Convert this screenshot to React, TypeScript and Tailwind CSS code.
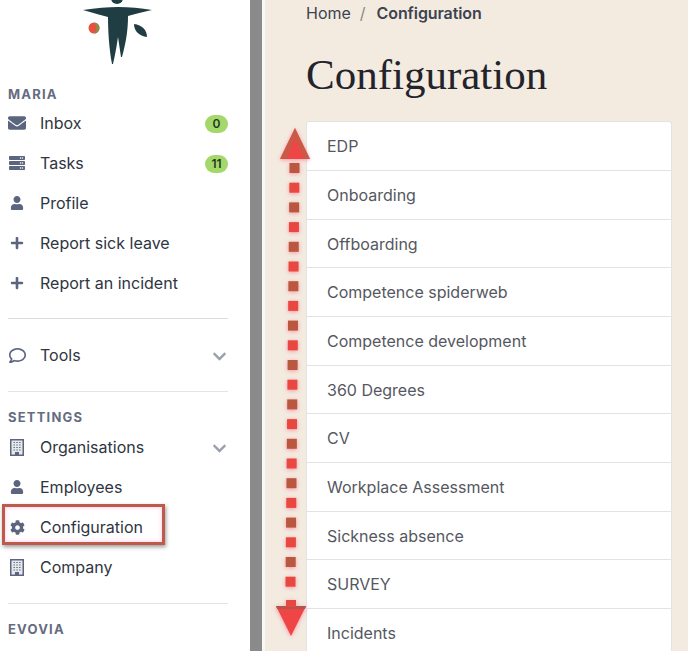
import type { ReactNode } from 'react'
import { FaChevronDown, FaCog, FaEnvelope, FaPlus, FaRegComment, FaServer, FaUser } from 'react-icons/fa'

const configItems = [
  'EDP',
  'Onboarding',
  'Offboarding',
  'Competence spiderweb',
  'Competence development',
  '360 Degrees',
  'CV',
  'Workplace Assessment',
  'Sickness absence',
  'SURVEY',
  'Incidents',
]

function NavItem({ icon, label, right }: { icon: ReactNode; label: string; right?: ReactNode }) {
  return (
    <div className="flex h-[40px] items-center">
      <span className="flex w-[18px] justify-center text-[#5b6580]">{icon}</span>
      <span className="ml-[14px] flex-1 text-[16px] text-[#2f3542]">{label}</span>
      {right}
    </div>
  )
}

function Badge({ value }: { value: string }) {
  return (
    <span className="mt-[2px] flex h-[18px] min-w-[23px] items-center justify-center rounded-full bg-[#a5d86a] px-[6px] text-[12px] font-semibold text-[#1f3a22]">
      {value}
    </span>
  )
}

function SectionLabel({ children }: { children: string }) {
  return <div className="text-[13px] font-bold leading-[16px] tracking-[1.2px] text-[#656c80]">{children}</div>
}

function Chevron() {
  return <FaChevronDown className="mt-[3px] mr-[1px] text-[15px] text-[#9aa0ad]" />
}

function BuildingIcon() {
  return (
    <svg width="14" height="17" viewBox="0 0 14 17">
      <rect x="0.75" y="0.75" width="12.5" height="15.5" fill="#e6e8ec" stroke="#5b6580" strokeWidth="1.5" />
      <path d="M3.5 3.5h7M3.5 6h7M3.5 8.5h7M3.5 11h7" stroke="#5b6580" strokeWidth="1.2" strokeDasharray="1.4 1.4" />
      <rect x="5" y="13" width="4" height="3" fill="#5b6580" />
    </svg>
  )
}

function Logo() {
  return (
    <svg width="72" height="66" viewBox="0 0 72 66" className="absolute left-[82px] top-0">
      <circle cx="35" cy="-2" r="6" fill="#1f3d42" />
      <path
        d="M1 10 C14 8 26 7 36 7 C47 7 59 8 70 10 C61 12 53 14 46 16 C46 30 44 42 40 57 L39 57 L36 37 C35 44 33 56 31 64 L30 64 C27 48 26 30 26 17 C17 15 9 12 1 10Z"
        fill="#1f3d42"
      />
      <path d="M52 24 C60 25 65 30 65 37 C57 36 52 31 52 24Z" fill="#1f3d42" />
      <circle cx="12" cy="28" r="5.5" fill="#e8503f" />
      <path d="M12 22.5 A5.5 5.5 0 0 1 12 33.5 A8 8 0 0 0 12 22.5Z" fill="#8f8a4a" />
    </svg>
  )
}

function ArrowOverlay() {
  const squares = Array.from({ length: 22 }, (_, i) => i)
  return (
    <svg
      width="50"
      height="530"
      viewBox="0 0 50 530"
      className="absolute left-[268px] top-[122px] drop-shadow-[0_1px_2px_rgba(255,90,130,0.6)]"
    >
      <path d="M27 6 L42 37 L12 37Z" fill="#f04545" />
      <path d="M27 6 L42 37 L36 37 L27 16 L19 37 L12 37Z" fill="#b0674a" opacity="0.6" />
      {squares.map(i => (
        <rect
          key={i}
          x={26.5 - i * 0.19 - 5}
          y={41 + i * 19.7}
          width="10"
          height="10"
          fill={i % 2 ? '#e8483f' : '#b9573f'}
        />
      ))}
      <path d="M8 484 L38 484 L23 514Z" fill="#f04545" />
      <path d="M8 484 L38 484 L37 487 L9 487Z" fill="#b0574a" />
      <rect x="18" y="478" width="10" height="7" fill="#e8483f" />
    </svg>
  )
}

export default function App() {
  return (
    <div className="relative flex h-[651px] w-[688px] overflow-hidden bg-white font-['Inter',sans-serif]">
      <aside className="w-[250px] shrink-0 bg-white pl-[8px] pr-[22px] pt-[86px]">
        <Logo />
        <SectionLabel>MARIA</SectionLabel>
        <div className="mt-[1px]">
          <NavItem icon={<FaEnvelope className="text-[18px]" />} label="Inbox" right={<Badge value="0" />} />
          <NavItem icon={<FaServer className="text-[16px]" />} label="Tasks" right={<Badge value="11" />} />
          <NavItem icon={<FaUser className="text-[14px]" />} label="Profile" />
          <NavItem icon={<FaPlus className="text-[14px]" />} label="Report sick leave" />
          <NavItem icon={<FaPlus className="text-[14px]" />} label="Report an incident" />
        </div>
        <div className="mt-[15px] border-t border-[#dcdcdc]" />
        <div className="mt-[16px]">
          <NavItem icon={<FaRegComment className="text-[17px]" />} label="Tools" right={<Chevron />} />
        </div>
        <div className="mt-[16px] border-t border-[#e4e4e4]" />
        <div className="mt-[17px]">
          <SectionLabel>SETTINGS</SectionLabel>
        </div>
        <div className="mt-[2px]">
          <NavItem icon={<BuildingIcon />} label="Organisations" right={<Chevron />} />
          <NavItem icon={<FaUser className="text-[14px]" />} label="Employees" />
          <NavItem icon={<FaCog className="text-[15px]" />} label="Configuration" />
          <NavItem icon={<BuildingIcon />} label="Company" />
        </div>
        <div className="mt-[16px] border-t border-[#e4e4e4]" />
        <div className="mt-[17px]">
          <SectionLabel>EVOVIA</SectionLabel>
        </div>
      </aside>

      <div className="w-[12px] shrink-0 bg-[#8a8a8a]" />
      <div className="w-[3px] shrink-0 bg-[#f7f7f5]" />

      <main className="flex-1 bg-[#f3ebe0] pl-[41px] pr-[16px] pt-[3px]">
        <div className="flex h-[20px] items-center text-[16px] text-[#3d4350]">
          <span>Home</span>
          <span className="ml-[9px] text-[#8a8a8a]">/</span>
          <span className="ml-[11px] font-semibold tracking-[-0.1px]">Configuration</span>
        </div>
        <h1 className="mt-[25px] font-['Liberation_Serif',serif] text-[43px] leading-[54px] text-[#23232b]">
          Configuration
        </h1>
        <div className="mt-[19.3px] overflow-hidden rounded-t-[3px] border border-b-0 border-[#e3e3e3] bg-white">
          {configItems.map(item => (
            <div
              key={item}
              className="flex h-[48.7px] items-center border-b border-[#e3e3e3] pl-[20px] text-[16px] text-[#55585f]"
            >
              {item}
            </div>
          ))}
        </div>
      </main>

      <div className="absolute left-[2px] top-[504px] h-[41px] w-[163px] border-[3px] border-[#bd5a4a] shadow-[1px_2px_4px_rgba(0,0,0,0.4),inset_0_0_4px_rgba(255,120,200,0.45)]" />
      <ArrowOverlay />
    </div>
  )
}
